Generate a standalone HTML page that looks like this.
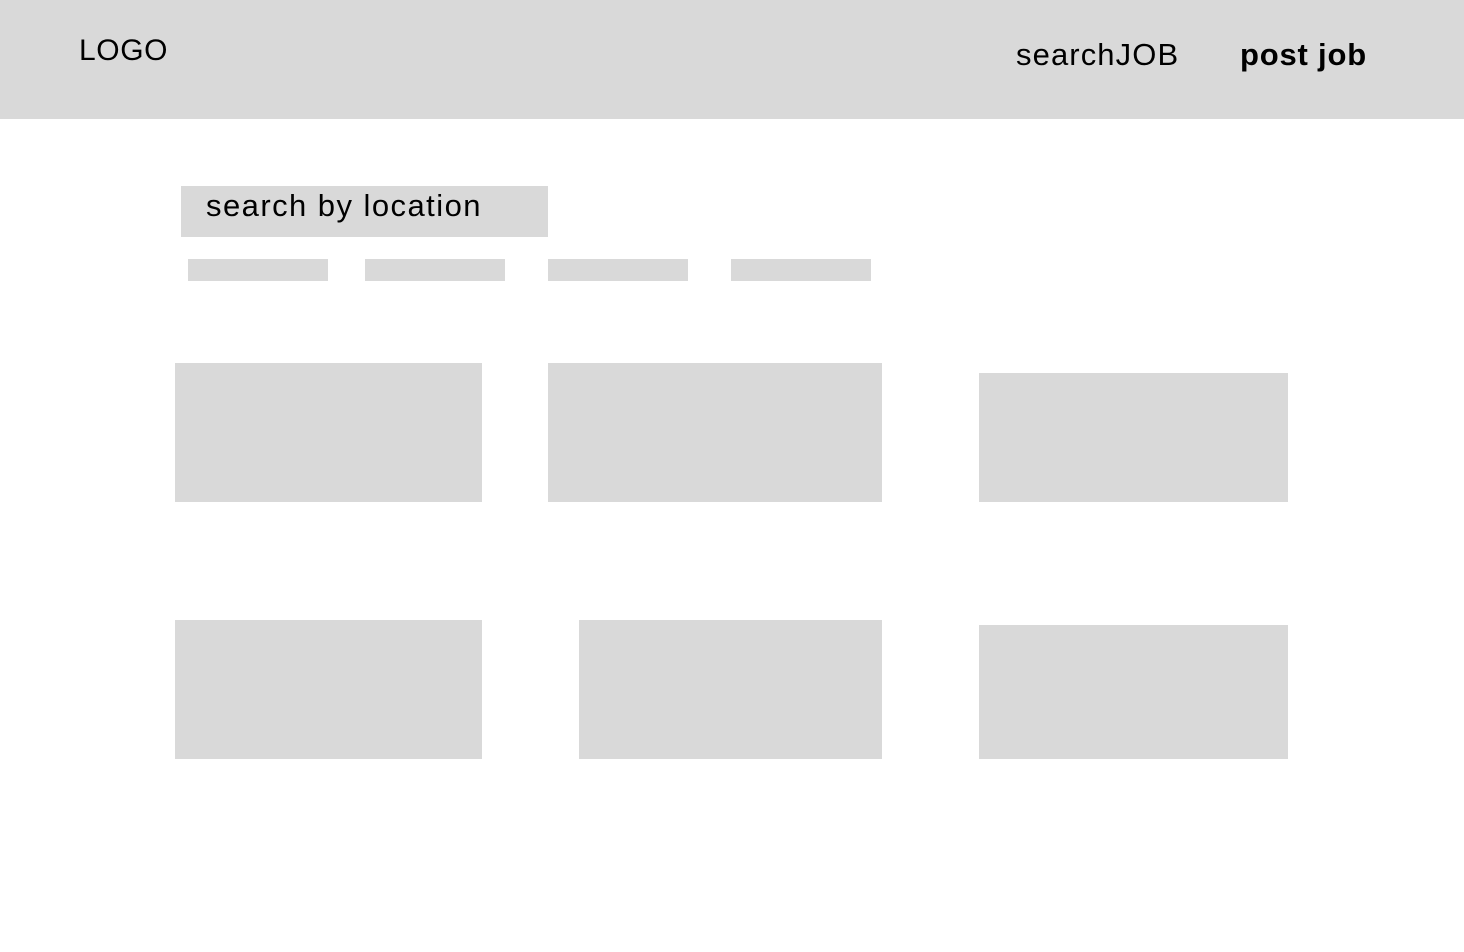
<!DOCTYPE html>
<html><head><meta charset="utf-8"><style>
body{margin:0;width:1464px;height:952px;background:#fff;position:relative;font-family:"Liberation Sans",sans-serif;overflow:hidden}
div{position:absolute}
.g{background:#d9d9d9}
.t{color:#000;white-space:nowrap}
</style></head><body>
<div class="g" style="left:0;top:0;width:1464px;height:119px"></div>
<div class="t" style="left:79px;top:34px;font-size:30px;letter-spacing:0.6px">LOGO</div>
<div class="t" style="left:1016px;top:37px;font-size:31px;letter-spacing:1.1px">searchJOB</div>
<div class="t" style="left:1240px;top:37px;font-size:31px;font-weight:bold;letter-spacing:0.8px">post job</div>
<div class="g" style="left:181px;top:186px;width:367px;height:51px"></div>
<div class="t" style="left:206px;top:188px;font-size:31px;letter-spacing:1.45px">search by location</div>
<div class="g" style="left:188px;top:259px;width:140px;height:22px"></div>
<div class="g" style="left:365px;top:259px;width:140px;height:22px"></div>
<div class="g" style="left:548px;top:259px;width:140px;height:22px"></div>
<div class="g" style="left:731px;top:259px;width:140px;height:22px"></div>
<div class="g" style="left:175px;top:363px;width:307px;height:139px"></div>
<div class="g" style="left:548px;top:363px;width:334px;height:139px"></div>
<div class="g" style="left:979px;top:373px;width:309px;height:129px"></div>
<div class="g" style="left:175px;top:620px;width:307px;height:139px"></div>
<div class="g" style="left:579px;top:620px;width:303px;height:139px"></div>
<div class="g" style="left:979px;top:625px;width:309px;height:134px"></div>
</body></html>
